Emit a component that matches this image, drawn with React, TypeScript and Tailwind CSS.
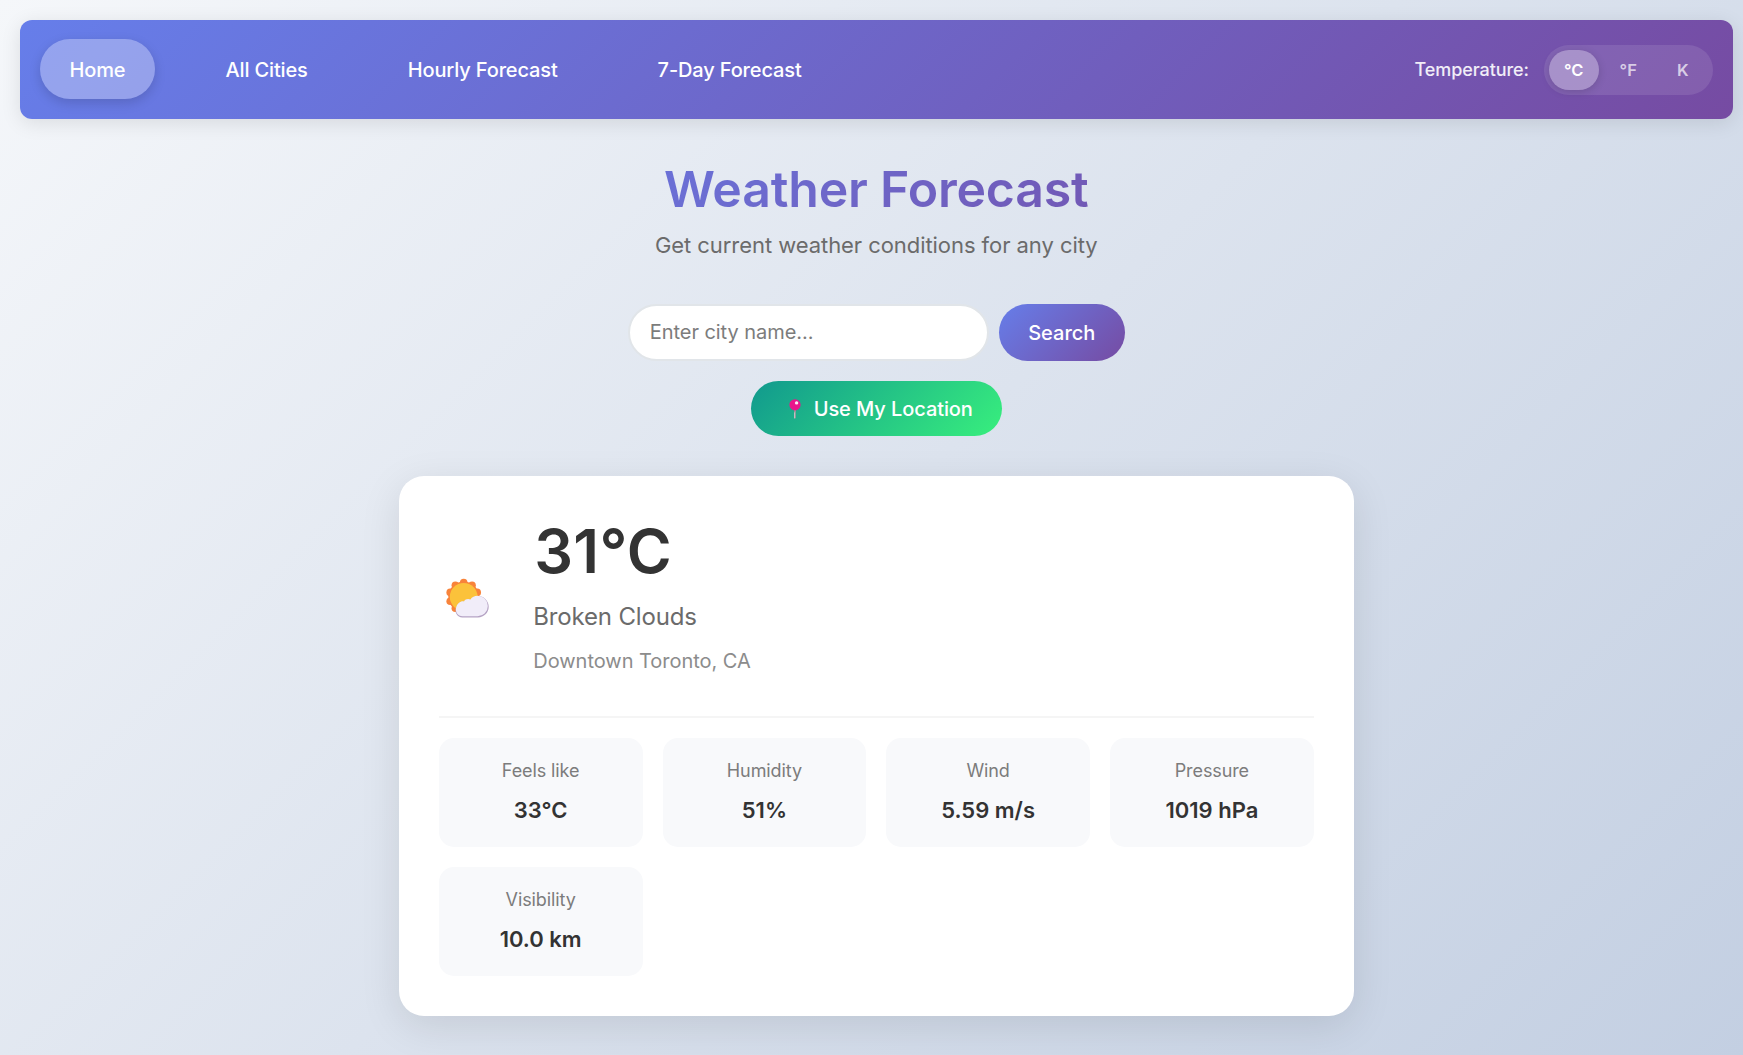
const navItems = ['Home', 'All Cities', 'Hourly Forecast', '7-Day Forecast'];
const units = ['°C', '°F', 'K'];
const details = [
  { label: 'Feels like', value: '33°C' },
  { label: 'Humidity', value: '51%' },
  { label: 'Wind', value: '5.59 m/s' },
  { label: 'Pressure', value: '1019 hPa' },
  { label: 'Visibility', value: '10.0 km' },
];

function PinIcon() {
  return (
    <svg className="h-5 w-3 shrink-0" viewBox="0 0 12 20" aria-hidden="true">
      <rect x="5.1" y="10" width="1.8" height="9.6" rx="0.8" fill="#9b9b9b" />
      <rect x="5.1" y="13" width="0.9" height="6.4" rx="0.4" fill="#c6c2c8" />
      <circle cx="6" cy="5.8" r="5.6" fill="#e9168c" />
      <circle cx="7.6" cy="3.9" r="1.7" fill="#fff" fillOpacity="0.9" />
    </svg>
  );
}

function SunCloudIcon() {
  const bumps = Array.from({ length: 10 }, (_, i) => (i * Math.PI) / 5);
  return (
    <svg className="h-10 w-11 shrink-0" viewBox="0 0 44 40" aria-hidden="true">
      <circle cx="18.7" cy="18.8" r="15.4" fill="#f8833a" />
      {bumps.map((a) => (
        <circle
          key={a}
          cx={18.7 + 14.2 * Math.sin(a)}
          cy={18.8 - 14.2 * Math.cos(a)}
          r="3.8"
          fill="#f8833a"
        />
      ))}
      <circle cx="18.7" cy="18.8" r="13.9" fill="#fbc23b" />
      <path
        d="M17.5 39.4 A6.8 6.8 0 0 1 11.6 29 C12.2 25.4 16 23 19 23.8 C20.2 21.4 23.6 20.6 25.6 22 C27.2 19.4 30 18 33 18 A10.7 10.7 0 0 1 33 39.4 Z"
        fill="#b5a3c4"
      />
      <path
        d="M17.5 38.2 A6.7 6.7 0 0 1 11.4 28.8 C12.2 25.4 16 22.6 19 23.4 C20.2 21 23.4 20.4 25.4 21.6 C27 19 29.6 17.8 32.6 17.8 A10.2 10.2 0 0 1 32.6 38.2 Z"
        fill="#f1edf9"
      />
    </svg>
  );
}

export default function App() {
  return (
    <div className="min-h-[1055px] w-full overflow-hidden bg-[linear-gradient(135deg,#f5f7fa_0%,#c3cfe2_100%)] pt-5 pr-[10.5px] pl-5 font-['Inter',sans-serif] text-[#333]">
      <nav className="flex h-[99px] items-center justify-between rounded-xl bg-[linear-gradient(135deg,#667eea_0%,#764ba2_100%)] pr-5 pb-px pl-[19.5px] shadow-[0_4px_20px_rgba(0,0,0,0.1)]">
        <div className="flex gap-10">
          {navItems.map((item, i) => (
            <a
              key={item}
              className={
                i === 0
                  ? 'flex h-[60px] items-center rounded-full bg-white/30 px-[30px] pt-0.5 text-xl font-medium tracking-[-0.14px] text-white shadow-[0_4px_12px_rgba(0,0,0,0.15)]'
                  : 'flex h-[60px] items-center rounded-full px-[30px] pt-0.5 text-xl font-medium tracking-[-0.14px] text-white'
              }
            >
              {item}
            </a>
          ))}
        </div>
        <div className="flex items-center gap-[15px] pt-px">
          <span className="text-lg font-medium tracking-[-0.06px] text-white/90">Temperature:</span>
          <div className="flex h-[50px] items-center gap-[5px] rounded-full bg-white/10 px-[5px]">
            {units.map((unit, i) => (
              <button
                key={unit}
                className={
                  i === 0
                    ? 'h-10 w-[49.5px] rounded-full bg-white/30 pt-px text-[16.5px] font-semibold text-white shadow-[0_2px_8px_rgba(0,0,0,0.15)]'
                    : 'h-10 w-[49.5px] rounded-full pt-px text-[16.5px] font-semibold text-white/70'
                }
              >
                {unit}
              </button>
            ))}
          </div>
        </div>
      </nav>

      <main className="flex flex-col items-center pt-10">
        <h1 className="w-[955px] bg-[linear-gradient(135deg,#667eea_0%,#764ba2_100%)] bg-clip-text text-center text-[50px] leading-[60px] font-semibold tracking-[-0.2px] text-transparent">
          Weather Forecast
        </h1>
        <p className="mt-[13px] text-[22px] leading-[27px] tracking-[-0.06px] text-[#6b6b6b]">
          Get current weather conditions for any city
        </p>

        <form className="mt-[45px] flex gap-2.5">
          <input
            className="h-[57px] w-[361px] rounded-full border-2 border-[#e1e5e9] bg-white px-5 pb-0.5 text-xl tracking-[-0.05px] placeholder:text-[#7c7c7c]"
            placeholder="Enter city name..."
          />
          <button
            type="button"
            className="h-[57px] w-[126px] rounded-full bg-[linear-gradient(135deg,#667eea_0%,#764ba2_100%)] text-xl font-medium text-white"
          >
            Search
          </button>
        </form>
        <button className="mt-5 flex h-[55px] w-[251.5px] items-center justify-center gap-[13px] rounded-full bg-[linear-gradient(135deg,#11998e_0%,#38ef7d_100%)] pt-px pl-[9px] text-xl font-medium tracking-[-0.08px] text-white">
          <PinIcon />
          Use My Location
        </button>

        <section className="mt-10 h-[540px] w-[955px] rounded-[25px] bg-white px-10 pt-10 shadow-[0_10px_40px_rgba(0,0,0,0.1)]">
          <div className="flex h-[202px] items-center gap-[44px] border-b-2 border-[#f5f5f5] pb-9 pl-[6.5px]">
            <SunCloudIcon />
            <div>
              <div className="pl-px text-[61px] leading-[60px] font-semibold tracking-[0.3px]">31°C</div>
              <div className="mt-5 text-2xl tracking-[-0.15px] text-[#6b6b6b]">Broken Clouds</div>
              <div className="mt-3.5 text-xl tracking-[-0.03px] text-[#8c8c8c]">Downtown Toronto, CA</div>
            </div>
          </div>
          <div className="mt-5 grid grid-cols-4 gap-5">
            {details.map(({ label, value }) => (
              <div
                key={label}
                className="flex h-[109px] flex-col items-center rounded-[15px] bg-[#f8f9fb] pt-[21px]"
              >
                <span className="text-lg leading-6 tracking-[-0.1px] text-[#7c7c7c]">{label}</span>
                <span className="mt-[13px] text-[22px] leading-7 font-semibold">{value}</span>
              </div>
            ))}
          </div>
        </section>
      </main>
    </div>
  );
}
